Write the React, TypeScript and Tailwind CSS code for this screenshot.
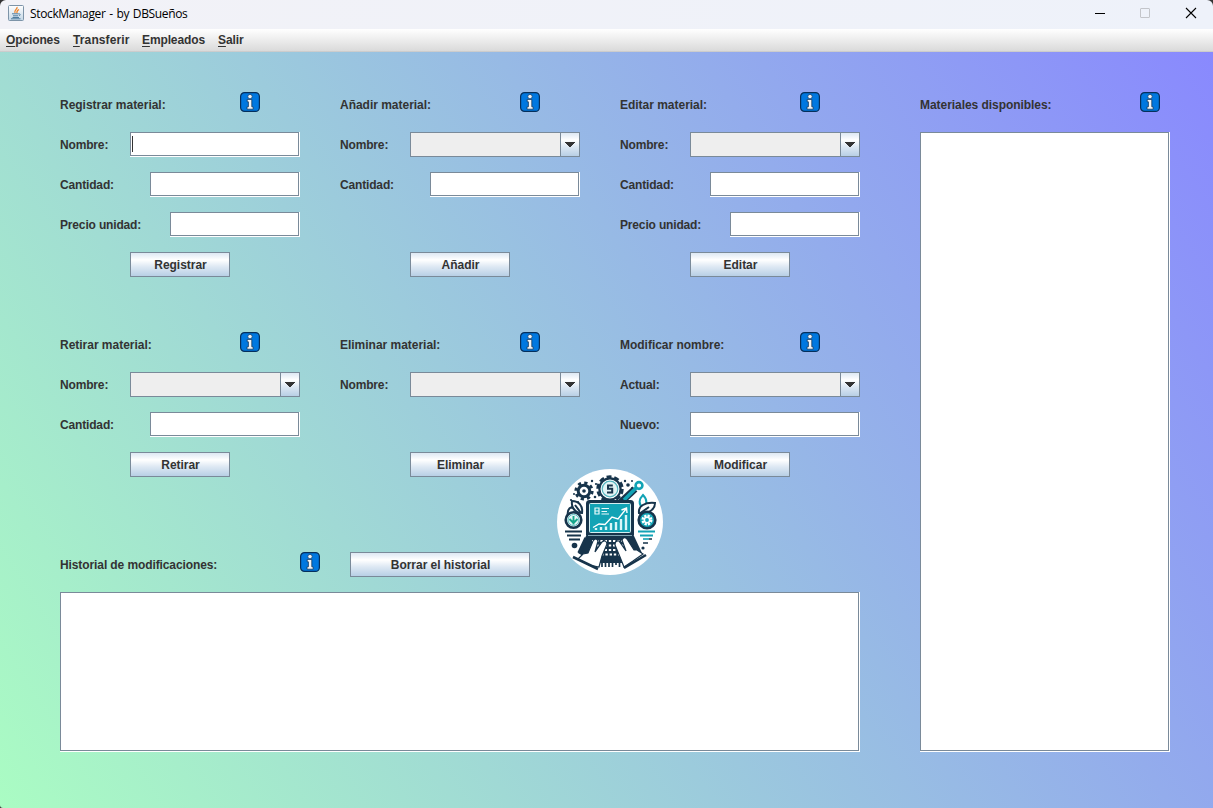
import React from "react";

function Info() {
  return (
    <svg width="20" height="20" viewBox="0 0 20 20" className="block shrink-0">
      <rect x="0.6" y="0.6" width="18.8" height="18.8" rx="4" fill="#0078e0" stroke="#06305c" strokeWidth="1.2" />
      <path d="M7.2 7.4H11.8V14.8H13.2V17.2H7V14.8H8.400V9.800H7.200Z" fill="#f4f4f4" stroke="#123a62" strokeWidth="0.8" />
      <circle cx="10" cy="4.600" r="2.200" fill="#f4f4f4" stroke="#123a62" strokeWidth="0.7" />
    </svg>
  );
}

function TextBox({ className, caret = false }: { className: string; caret?: boolean }) {
  return (
    <div className={`h-[25px] border-r border-b border-white ${className}`}>
      <div className="h-full border border-[#7a8a99] bg-white pt-[3px] pl-px">
        {caret && <div className="h-4 w-px bg-[#333333]" />}
      </div>
    </div>
  );
}

function Combo() {
  return (
    <div className="flex h-[25px] w-[170px] border border-[#7a8a99] bg-[#eeeeee]">
      <div className="flex-1" />
      <div className="flex w-[19px] items-center justify-center border-l border-[#7a8a99] bg-[linear-gradient(#dde8f3_0%,#ffffff_30%,#dde8f3_60%,#b8cfe5_100%)]">
        <svg width="10" height="5" viewBox="0 0 10 5" shapeRendering="crispEdges">
          <path d="M0 0H10V1H9V2H8V3H7V4H6V5H4V4H3V3H2V2H1V1H0Z" fill="#333333" />
        </svg>
      </div>
    </div>
  );
}

function Button({ children, className = "w-[100px]" }: { children: React.ReactNode; className?: string }) {
  return (
    <button
      className={`h-[25px] border border-[#7a8a99] bg-[linear-gradient(#dde8f3_0%,#ffffff_30%,#dde8f3_60%,#b8cfe5_100%)] pl-px tracking-[-0.03px] ${className}`}
    >
      {children}
    </button>
  );
}

type Field = { label: string; kind: "combo" | "wide" | "mid" | "short" | "caret" };

function FieldControl({ kind }: { kind: Field["kind"] }) {
  if (kind === "combo") return <Combo />;
  if (kind === "mid") return <TextBox className="w-[150px]" />;
  if (kind === "short") return <TextBox className="w-[130px]" />;
  return <TextBox className="w-[170px]" caret={kind === "caret"} />;
}

function Section({ title, fields, action, className }: { title: string; fields: Field[]; action: string; className: string }) {
  return (
    <section className={`flex w-60 flex-col ${className}`}>
      <header className="flex h-10 justify-between pr-10">
        <span className="h-[26px] leading-[26px] tracking-[-0.02px]">{title}</span>
        <Info />
      </header>
      {fields.map((f) => (
        <div key={f.label} className="flex h-10 justify-between">
          <span className="h-[26px] leading-[26px] tracking-[-0.16px]">{f.label}</span>
          <FieldControl kind={f.kind} />
        </div>
      ))}
      <div className="mt-auto pl-[70px]">
        <Button>{action}</Button>
      </div>
    </section>
  );
}

const topSections: { title: string; action: string; fields: Field[] }[] = [
  {
    title: "Registrar material:",
    action: "Registrar",
    fields: [
      { label: "Nombre:", kind: "caret" },
      { label: "Cantidad:", kind: "mid" },
      { label: "Precio unidad:", kind: "short" },
    ],
  },
  {
    title: "Añadir material:",
    action: "Añadir",
    fields: [
      { label: "Nombre:", kind: "combo" },
      { label: "Cantidad:", kind: "mid" },
    ],
  },
  {
    title: "Editar material:",
    action: "Editar",
    fields: [
      { label: "Nombre:", kind: "combo" },
      { label: "Cantidad:", kind: "mid" },
      { label: "Precio unidad:", kind: "short" },
    ],
  },
];

const bottomSections: { title: string; action: string; fields: Field[] }[] = [
  {
    title: "Retirar material:",
    action: "Retirar",
    fields: [
      { label: "Nombre:", kind: "combo" },
      { label: "Cantidad:", kind: "mid" },
    ],
  },
  { title: "Eliminar material:", action: "Eliminar", fields: [{ label: "Nombre:", kind: "combo" }] },
  {
    title: "Modificar nombre:",
    action: "Modificar",
    fields: [
      { label: "Actual:", kind: "combo" },
      { label: "Nuevo:", kind: "wide" },
    ],
  },
];

function Logo() {
  const n = "#17344b";
  const t = "#12a3b5";
  return (
    <svg width="106" height="106" viewBox="0 0 106 106" className="block">
      <circle cx="53" cy="53" r="53" fill="#fff" />
      {/* small gear */}
      <circle cx="27" cy="22" r="5.8" fill="none" stroke={n} strokeWidth="3" />
      <circle cx="27" cy="22" r="8.2" fill="none" stroke={n} strokeWidth="2.8" strokeDasharray="3.22 3.22" />
      <circle cx="27" cy="22" r="1.8" fill={n} />
      {/* coin gear */}
      <circle cx="53" cy="20" r="12.4" fill="none" stroke={n} strokeWidth="2.6" strokeDasharray="5 2.8" />
      <circle cx="53" cy="20" r="10.6" fill="#fff" stroke={n} strokeWidth="2.2" />
      <circle cx="53" cy="20" r="7.8" fill="#e3f3f4" stroke="#55b5bf" strokeWidth="1.2" />
      <path d="M55.8 16.6H51V19.8H55.2V23.6H50" fill="none" stroke={n} strokeWidth="2" />
      {/* wrench */}
      <path d="M64 33L78 20" stroke={n} strokeWidth="7" />
      <path d="M67 31L81 17" stroke={t} strokeWidth="3.6" />
      <circle cx="82" cy="16.5" r="3.4" fill="#fff" stroke={t} strokeWidth="2.6" />
      <g fill={n}>
        <circle cx="71" cy="16" r="1.8" />
        <circle cx="75" cy="12" r="1" />
        <circle cx="68" cy="12" r="1.2" />
        <circle cx="75" cy="19" r="1.1" />
        <circle cx="35" cy="12" r="1.2" />
        <circle cx="39" cy="15" r="1.1" />
        <circle cx="17" cy="25" r="1" />
        <circle cx="14" cy="31" r="1.1" />
        <circle cx="38" cy="28" r="1.3" />
        <circle cx="21" cy="33" r="1" />
        <circle cx="93" cy="46" r="1" />
      </g>
      {/* leaves */}
      <g fill="#fff" stroke={n} strokeWidth="2">
        <path d="M15 32C22 32 26 37 25 44C18 44 14 39 15 32Z" />
        <path d="M11 47C10 42 12 39 15 38L20 44" />
        <path d="M86 26C91 31 90 36 86 39C81 35 82 30 86 26Z" stroke={t} />
        <path d="M82 44C81 37 88 33 98 34C98 41 91 45 82 44Z" />
        <path d="M18 36L24 44M82 45L92 38" />
      </g>
      {/* round badges */}
      <circle cx="16.500" cy="51" r="7.800" fill="#e6f7f7" stroke={n} strokeWidth="2.6" />
      <circle cx="16.500" cy="51" r="5.500" fill="none" stroke="#5cbcc2" strokeWidth="1" />
      <path d="M16.500 55.500V50M16.500 54L12.500 50M16.500 54L20.500 50M16.500 50V47" stroke="#17a58a" strokeWidth="1.900" />
      <circle cx="90" cy="51" r="8.300" fill={t} stroke={n} strokeWidth="2.6" />
      <circle cx="90" cy="51" r="4" fill="none" stroke="#fff" strokeWidth="3" strokeDasharray="2.1 1.04" />
      <circle cx="90" cy="51" r="3.400" fill="#fff" />
      <circle cx="90" cy="51" r="1.900" fill={t} />
      {/* side lines */}
      <path d="M8 62.500H25M10 66.500H24M12 70.500H23" stroke={n} strokeWidth="1.800" />
      <circle cx="17.500" cy="76.500" r="2.800" fill={n} />
      <path d="M81 62.500H98M83 66.500H96" stroke={t} strokeWidth="1.900" />
      <path d="M86 70H92" stroke={t} strokeWidth="1.600" />
      <path d="M92 70H95M86 74H91" stroke={n} strokeWidth="1.600" />
      <circle cx="86" cy="79" r="1.600" fill={n} />
      {/* keyboard base */}
      <path d="M29 67H77L85 84L68 94H38L21 84Z" fill={n} />
      <path d="M35 72H72M35 76.500H72M35 81H72M40 85.500H68" stroke="#fff" strokeWidth="1.800" strokeDasharray="2.4 1.8" />
      {/* monitor */}
      <rect x="29" y="31" width="48" height="38" rx="3.5" fill={n} />
      <path d="M31 66.500H75" stroke="#7ea3b2" strokeWidth="1" />
      <rect x="32.500" y="34.500" width="41" height="29" rx="1" fill={t} stroke="#d4eef1" strokeWidth="1" />
      <path d="M38 39H42V45H38ZM38 42H42M44.500 39.500H52M44.500 42.500H50M44.500 45H52" fill="none" stroke="#e9fafb" strokeWidth="1.200" />
      <path d="M36 58.500L42 55L48 55.500L55 48L61 50L69 40M64.500 41L69.500 39L70 44" fill="none" stroke="#fff" strokeWidth="1.400" />
      <path d="M39 61V59M44 61V58M49 61V57.500M54 61V54M59 61V53M64 61V50M69 61V46" stroke="#d9f6f8" strokeWidth="2.400" />
      {/* hands */}
      <g stroke={n} strokeWidth="1.200" fill="#fff">
        <path d="M21 90L26 85L31 84L36 72Q39 68 41 72L38 83L45 73Q49 70 50 75L45 87L42 98L32 96Z" />
        <path d="M86 85L80 81L77 81L70 70Q67 67 65 71L69 82L62 72Q58 71 58 76L63 88L67 98L76 92Z" />
      </g>
      <path d="M29 69L22 84" stroke={n} strokeWidth="3.400" />
      <path d="M16 88L41 100M89 86L67 99" stroke={n} strokeWidth="2.600" />
      <path d="M45 90V98M48.500 90V98M52 88V98M55.500 90V98M59 90V96M62.500 90V98" stroke={n} strokeWidth="1.700" />
      <path d="M45 89.500H63" stroke={n} strokeWidth="1.800" />
    </svg>
  );
}

function JavaIcon() {
  return (
    <svg width="16" height="16" viewBox="0 0 16 16" className="block">
      <defs>
        <linearGradient id="cup" x1="0" y1="0" x2="0" y2="1">
          <stop offset="0" stopColor="#ffffff" />
          <stop offset="1" stopColor="#c3d7e6" />
        </linearGradient>
      </defs>
      <rect x="0.5" y="0.5" width="15" height="15" rx="1" fill="url(#cup)" stroke="#7d94a8" />
      <path d="M9 2C10 4 5.500 5 7 8M11 4.500C9 5.500 8.500 6 9 8" fill="none" stroke="#f08326" strokeWidth="1.300" />
      <path d="M4 8.800H10.500M5 10.800H10M4.500 12.500H11M10.500 9C13 8.500 12.500 10.500 10.800 10.800M3 13.800H12.500" fill="none" stroke="#3f7196" strokeWidth="0.9" />
    </svg>
  );
}

const menus = [
  { label: "Opciones", className: "w-[67px] tracking-[-0.12px]" },
  { label: "Transferir", className: "w-[69px] tracking-[0.12px]" },
  { label: "Empleados", className: "w-[76px] tracking-[-0.12px]" },
  { label: "Salir", className: "w-10 tracking-[-0.1px]" },
];

export default function App() {
  return (
    <div className="flex h-[808px] w-[1213px] flex-col overflow-hidden bg-[#333333] font-['Liberation_Sans',Arial,sans-serif] text-[12px] font-bold text-[#333333]">
      <div className="flex h-[29px] shrink-0 items-center rounded-t-[6px] bg-[linear-gradient(90deg,#f2f2f7,#eef2fa)] pb-[3px] pl-2 text-black">
        <JavaIcon />
        <span className="mt-px ml-[6px] font-['Open_Sans','Noto_Sans',sans-serif] text-[12px] font-normal tracking-[-0.36px] whitespace-nowrap [word-spacing:1px]">
          StockManager - by DBSueños
        </span>
        <svg width="104" height="12" viewBox="0 0 104 12" className="mr-4 ml-auto block" fill="none">
          <path d="M2 6.500H12" stroke="#000" shapeRendering="crispEdges" />
          <rect x="47.500" y="1.500" width="9" height="9" rx="0.5" stroke="#c3c5ca" />
          <path d="M93 1L103 11M103 1L93 11" stroke="#000" strokeWidth="1.100" />
        </svg>
      </div>
      <nav className="flex h-[23px] shrink-0 border-b border-[#cccccc] bg-[linear-gradient(#ffffff,#dadada)] pl-[6px] leading-[22px]">
        {menus.map((m) => (
          <span key={m.label} className={m.className}>
            <span className="underline decoration-1 underline-offset-2">{m.label[0]}</span>
            {m.label.slice(1)}
          </span>
        ))}
      </nav>
      <main className="relative flex flex-1 gap-[60px] rounded-bl-[3px] bg-[linear-gradient(58deg,#aafcc3,#8989fe)] pt-10 pl-[60px]">
        <div className="w-[800px]">
          <div className="flex h-60 gap-10">
            {topSections.map((s) => (
              <Section key={s.title} {...s} className="h-[185px]" />
            ))}
          </div>
          <div className="flex h-[220px] gap-10">
            {bottomSections.map((s) => (
              <Section key={s.title} {...s} className="h-[145px]" />
            ))}
          </div>
          <div className="flex h-10">
            <span className="h-[26px] w-60 leading-[26px] tracking-[-0.1px]">Historial de modificaciones:</span>
            <Info />
            <Button className="ml-[30px] w-[180px]">Borrar el historial</Button>
          </div>
          <div className="h-40 border-r border-b border-white">
            <div className="h-full border border-[#7a8a99] bg-white" />
          </div>
        </div>
        <div className="w-[250px]">
          <div className="flex h-10 justify-between pr-[10px]">
            <span className="h-[26px] leading-[26px] tracking-[-0.05px]">Materiales disponibles:</span>
            <Info />
          </div>
          <div className="h-[620px] border-r border-b border-white">
            <div className="h-full border border-[#7a8a99] bg-white" />
          </div>
        </div>
        <div className="absolute top-[417px] left-[557px]">
          <Logo />
        </div>
      </main>
    </div>
  );
}
